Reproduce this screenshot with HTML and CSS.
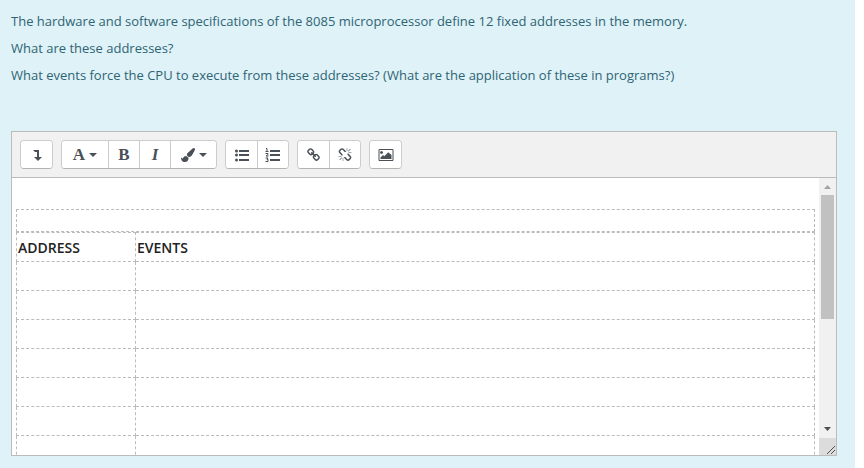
FILE: index.html
```html
<!DOCTYPE html>
<html lang="en">
<head>
    <meta charset="utf-8">
    <title>8085 fixed addresses</title>
    <link rel="stylesheet" href="styles.css">
</head>
<body>
    <main class="formulation">
        <div class="qtext">
            <p>The hardware and software specifications of the 8085 microprocessor define 12 fixed addresses in the memory.</p>
            <p>What are these addresses?</p>
            <p>What events force the CPU to execute from these addresses? (What are the application of these in programs?)</p>
        </div>

        <div class="editor">
            <div class="toolbar" role="toolbar" aria-label="Editor">
                <div class="group">
                    <button type="button" class="btn" aria-label="Show more buttons">
                        <svg class="icon" viewBox="0 0 14 14"><path d="M3 2h6v7h3l-4 4-4-4h3V4H5z"/></svg>
                    </button>
                </div>
                <div class="group">
                    <button type="button" class="btn menu" aria-label="Paragraph styles">
                        <span class="letter">A</span>
                        <svg class="caret" viewBox="0 0 8 4"><path d="M0 0h8L4 4z"/></svg>
                    </button>
                    <button type="button" class="btn" aria-label="Bold"><span class="letter">B</span></button>
                    <button type="button" class="btn" aria-label="Italic"><span class="letter italic">I</span></button>
                    <button type="button" class="btn menu" aria-label="Font colour">
                        <svg class="icon" viewBox="0 0 1792 1792"><path d="M1615 0q70 0 122.500 46.500t52.500 116.500q0 63-45 151-332 629-465 752-97 91-218 91-126 0-216.500-92.500t-90.500-219.500q0-128 92-212l638-579q59-54 130-54zm-909 1034q39 76 106.500 130t150.500 76l1 71q4 213-129.500 347t-348.500 134q-123 0-218-46.500t-152.500-127.500-86.500-183-29-220q7 5 41 30t62 44.500 59 36.500 46 17q41 0 55-37 25-66 57.500-112.500t69.500-76 88-47.500 103-25.500 125-10.500z"/></svg>
                        <svg class="caret" viewBox="0 0 8 4"><path d="M0 0h8L4 4z"/></svg>
                    </button>
                </div>
                <div class="group">
                    <button type="button" class="btn" aria-label="Unordered list">
                        <svg class="icon wide" viewBox="0 0 16 14"><circle cx="2.500" cy="3" r="1.500"/><circle cx="2.500" cy="7" r="1.500"/><circle cx="2.500" cy="12" r="1.500"/><path d="M5 2h10v2H5zM5 6h10v2H5zM5 11h10v2H5z"/></svg>
                    </button>
                    <button type="button" class="btn" aria-label="Ordered list">
                        <svg class="icon wide" viewBox="0 0 16 14"><path d="M5 2h10v2H5zM5 6h10v2H5zM5 11h10v2H5z"/><path class="line thin" d="M1 .5h1v3M.5 3.500h3M.5 5.500h2.500v1l-2 1.500h2.500M.5 10h2.500l-1 1.500h1v2H.5"/></svg>
                    </button>
                </div>
                <div class="group">
                    <button type="button" class="btn" aria-label="Link">
                        <svg class="icon" viewBox="0 0 1792 1792"><path d="M1456 1216q0-40-28-68l-208-208q-28-28-68-28-42 0-72 32 3 3 19 18.500t21.500 21.500 15 19 13 25.500 3.500 27.500q0 40-28 68t-68 28q-15 0-27.500-3.500t-25.500-13-19-15-21.500-21.500-18.500-19q-33 31-33 73 0 40 28 68l206 207q27 27 68 27 40 0 68-26l147-146q28-28 28-67zm-703-705q0-40-28-68l-206-207q-28-28-68-28-39 0-68 27l-147 146q-28 28-28 67 0 40 28 68l208 208q27 27 68 27 42 0 72-31-3-3-19-18.500t-21.500-21.500-15-19-13-25.500-3.500-27.500q0-40 28-68t68-28q15 0 27.500 3.500t25.500 13 19 15 21.500 21.500 18.500 19q33-31 33-73zm895 705q0 120-85 203l-147 146q-83 83-203 83-121 0-204-85l-206-207q-83-83-83-203 0-123 88-209l-88-88q-86 88-208 88-120 0-204-84l-208-208q-84-84-84-204t85-203l147-146q83-83 203-83 121 0 204 85l206 207q83 83 83 203 0 123-88 209l88 88q86-88 208-88 120 0 204 84l208 208q84 84 84 204z"/></svg>
                    </button>
                    <button type="button" class="btn" aria-label="Unlink">
                        <svg class="icon" viewBox="0 0 1792 1792"><path d="M503 1271l-256 256q-10 9-23 9-12 0-23-9-9-10-9-23t9-23l256-256q10-9 23-9t23 9q9 10 9 23t-9 23zm169 41v320q0 14-9 23t-23 9-23-9-9-23v-320q0-14 9-23t23-9 23 9 9 23zm-224-224q0 14-9 23t-23 9h-320q-14 0-23-9t-9-23 9-23 23-9h320q14 0 23 9t9 23zm1264 128q0 120-85 203l-147 146q-83 83-203 83-121 0-204-85l-334-335q-21-21-42-56l239-18 273 274q28 28 68 27.500t68-27.500l147-146q28-28 28-67 0-40-28-68l-274-275 18-239q35 21 56 42l336 336q84 86 84 204zm-617-724l-239 18-273-274q-28-28-68-28-39 0-68 27l-147 146q-28 28-28 67 0 40 28 68l274 274-18 240q-35-21-56-42l-336-336q-84-86-84-204 0-120 85-203l147-146q83-83 203-83 121 0 204 85l334 335q21 21 42 56zm633 84q0 14-9 23t-23 9h-320q-14 0-23-9t-9-23 9-23 23-9h320q14 0 23 9t9 23zm-544-544v320q0 14-9 23t-23 9-23-9-9-23v-320q0-14 9-23t23-9 23 9 9 23zm407 151l-256 256q-11 9-23 9t-23-9q-9-10-9-23t9-23l256-256q10-9 23-9t23 9q9 10 9 23t-9 23z"/></svg>
                    </button>
                </div>
                <div class="group">
                    <button type="button" class="btn" aria-label="Image">
                        <svg class="icon wide" viewBox="0 0 1920 1792"><path d="M576 576q0 80-56 136t-136 56-136-56-56-136 56-136 136-56 136 56 56 136zm1088 320v512h-1408v-192l320-320 160 160 512-512zm96-640h-1600q-13 0-22.500 9.500t-9.500 22.500v1216q0 13 9.500 22.500t22.500 9.500h1600q13 0 22.500-9.500t9.500-22.500v-1216q0-13-9.500-22.500t-22.500-9.500zm160 32v1216q0 66-47 113t-113 47h-1600q-66 0-113-47t-47-113v-1216q0-66 47-113t113-47h1600q66 0 113 47t47 113z"/></svg>
                    </button>
                </div>
            </div>

            <div class="content-wrap">
                <div class="content" contenteditable="true" role="textbox" aria-label="Answer text">
                    <table class="answer">
                        <caption></caption>
                        <thead>
                            <tr><th class="address" scope="col">ADDRESS</th><th scope="col">EVENTS</th></tr>
                        </thead>
                        <tbody>
                            <tr><td></td><td></td></tr>
                            <tr><td></td><td></td></tr>
                            <tr><td></td><td></td></tr>
                            <tr><td></td><td></td></tr>
                            <tr><td></td><td></td></tr>
                            <tr><td></td><td></td></tr>
                            <tr><td></td><td></td></tr>
                        </tbody>
                    </table>
                </div>
                <div class="scrollbar" aria-hidden="true">
                    <svg class="arrow up" viewBox="0 0 17 17"><path d="M5 11h7L8.500 7z"/></svg>
                    <div class="track"><div class="thumb"></div></div>
                    <svg class="arrow" viewBox="0 0 17 17"><path d="M5 6h7L8.500 10z"/></svg>
                    <svg class="resizer" viewBox="0 0 17 17"><path d="M8 16 16 8M12 16l4-4"/></svg>
                </div>
            </div>
        </div>
    </main>
</body>
</html>
```
FILE: styles.css
```css
* {
    box-sizing: border-box;
}

body {
    margin: 0;
    background-color: #fff;
    font-family: "Open Sans", "Noto Sans", sans-serif;
    font-size: 13px;
    line-height: 21px;
}

.formulation {
    min-height: 100vh;
    margin-right: 9px;
    padding: 11px 18px 12px 11px;
    background-color: #def2f8;
    color: #2f6473;
}

.qtext {
    margin-bottom: 45px;
}

.qtext p {
    margin: 0 0 6px;
}

.qtext p:last-child {
    margin-bottom: 0;
}

.editor {
    border: 1px solid #bbb;
    background-color: #fff;
}

.toolbar {
    display: flex;
    flex-wrap: wrap;
    gap: 8px;
    padding: 8px;
    border-bottom: 1px solid #bbb;
    background-color: #f1f1f1;
}

.group {
    display: flex;
    border: 1px solid #ccc;
    border-bottom-color: #b3b3b3;
    border-radius: 4px;
    background-color: #fff;
    overflow: hidden;
}

.btn {
    display: flex;
    align-items: center;
    justify-content: center;
    gap: 4px;
    width: 31px;
    height: 27px;
    padding: 0;
    border: 0;
    background-color: #fff;
    color: #495057;
    cursor: pointer;
}

.btn + .btn {
    border-left: 1px solid #ccc;
}

.btn.menu {
    width: 46px;
}

.btn:hover {
    background-color: #e6e6e6;
}

.letter {
    font-family: "Liberation Serif", serif;
    font-size: 17px;
    font-weight: bold;
}

.italic {
    font-style: italic;
}

.icon {
    width: 14px;
    height: 14px;
    fill: currentColor;
}

.icon.wide {
    width: 16px;
}

.line {
    fill: none;
    stroke: currentColor;
    stroke-width: 2;
}

.line.thin {
    stroke-width: 1;
}

.caret {
    width: 8px;
    height: 4px;
    fill: currentColor;
}

.content-wrap {
    display: flex;
    height: 277px;
}

.content {
    flex: 1;
    padding: 31px 4px 0;
    overflow: hidden;
    outline: none;
    color: #222;
}

.answer {
    width: 100%;
    border-collapse: collapse;
    table-layout: fixed;
}

.answer caption {
    height: 23px;
    border: 1px dashed #bbb;
}

.answer th,
.answer td {
    height: 29px;
    padding: 0 1px;
    border: 1px dashed #bbb;
    text-align: left;
}

.answer th {
    font-size: 14px;
    font-weight: 600;
}

.answer .address {
    width: 119px;
}

.scrollbar {
    display: flex;
    flex-direction: column;
    width: 17px;
    background-color: #f1f1f1;
}

.arrow,
.resizer {
    width: 17px;
    height: 17px;
    fill: #505050;
}

.arrow.up {
    fill: #a3a3a3;
}

.track {
    flex: 1;
    padding: 0 2px;
}

.thumb {
    height: 55%;
    background-color: #c1c1c1;
}

.resizer {
    background-color: #dcdcdc;
    stroke: #505050;
}
```
